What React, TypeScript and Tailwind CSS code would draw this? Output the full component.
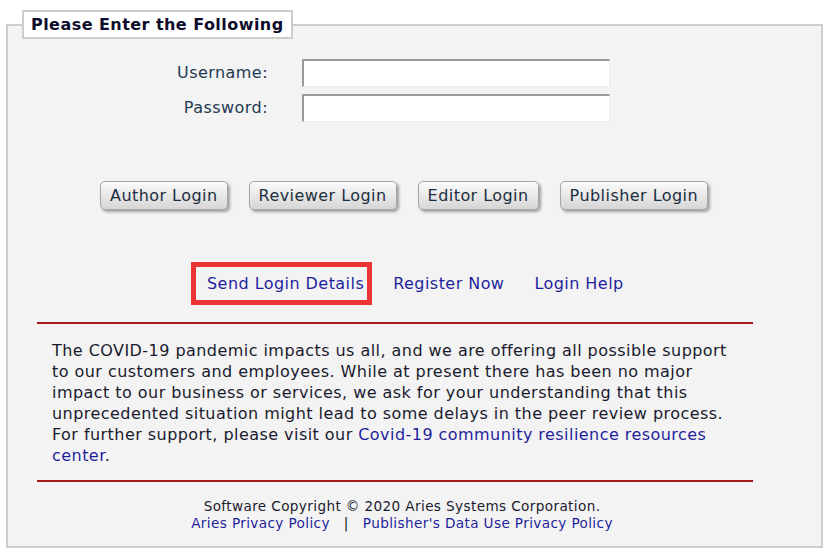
export default function App() {
  const font = "font-['Verdana','DejaVu_Sans',sans-serif]";
  const buttons = ["Author Login", "Reviewer Login", "Editor Login", "Publisher Login"];

  return (
    <div className={`min-h-[555px] w-[830px] bg-white pt-[10px] tracking-[0.45px] ${font}`}>
      <fieldset className="mx-[6px] w-[817px] border-2 border-[#cdcdcd] bg-[#f3f3f3] pb-[14px]">
        <legend className="ml-[14px] border-2 border-[#cdcdcd] bg-white px-[7px] text-[16px] leading-[25px] font-bold text-[#0d0d2b]">
          Please Enter the Following
        </legend>

        {/* Credentials */}
        <div className="mt-[20px] grid grid-cols-[260px_308px] gap-x-[34px] gap-y-[7px] text-[16px] text-[#243a52]">
          <label className="flex items-center justify-end">Username:</label>
          <input
            type="text"
            className="h-[28px] border-t-2 border-l-2 border-b border-r border-t-[#9a9a9a] border-l-[#9a9a9a] border-b-[#ececec] border-r-[#ececec] bg-white outline-none"
          />
          <label className="flex items-center justify-end">Password:</label>
          <input
            type="password"
            className="h-[28px] border-t-2 border-l-2 border-b border-r border-t-[#9a9a9a] border-l-[#9a9a9a] border-b-[#ececec] border-r-[#ececec] bg-white outline-none"
          />
        </div>

        {/* Login buttons */}
        <div className="mt-[59px] ml-[92px] flex gap-[21px]">
          {buttons.map((b) => (
            <button
              key={b}
              className="h-[29px] rounded-[5px] border border-[#a5a5a5] bg-gradient-to-b from-[#fbfbfb] to-[#d6d6d6] px-[9px] text-[16px] leading-[27px] text-[#1c2e40] shadow-[2px_2px_3px_rgba(0,0,0,0.35)]"
            >
              {b}
            </button>
          ))}
        </div>

        {/* Links */}
        <div className="mt-[52px] ml-[183px] flex items-center text-[16px] text-[#1f1f9c]">
          <a className="border-[5px] border-[#ec3434] pl-[11px] pr-[3px] leading-[33px]">Send Login Details</a>
          <a className="ml-[21px]">Register Now</a>
          <a className="ml-[30px]">Login Help</a>
        </div>

        <div className="mt-[17px] ml-[29px] w-[716px] border-t-2 border-[#a31919]" />

        {/* Notice */}
        <p className="mt-[16px] ml-[44px] text-[16px] leading-[21px] text-[#1a1a2e]">
          The COVID-19 pandemic impacts us all, and we are offering all possible support
          <br />
          to our customers and employees. While at present there has been no major
          <br />
          impact to our business or services, we ask for your understanding that this
          <br />
          unprecedented situation might lead to some delays in the peer review process.
          <br />
          For further support, please visit our{" "}
          <a className="text-[#1f1f9c]">Covid-19 community resilience resources</a>
          <br />
          <a className="text-[#1f1f9c]">center</a>.
        </p>

        <div className="mt-[14px] ml-[29px] w-[716px] border-t-2 border-[#a31919]" />

        {/* Footer */}
        <div className="mt-[16px] ml-[29px] w-[730px] text-center text-[13.6px] leading-[17px] tracking-[0.38px] text-[#1a1a2e]">
          <div>Software Copyright © 2020 Aries Systems Corporation.</div>
          <div className="text-[#1f1f9c]">
            <a>Aries Privacy Policy</a>
            <span className="mx-[14px] text-[#1a1a2e]">|</span>
            <a>Publisher's Data Use Privacy Policy</a>
          </div>
        </div>
      </fieldset>
    </div>
  );
}
